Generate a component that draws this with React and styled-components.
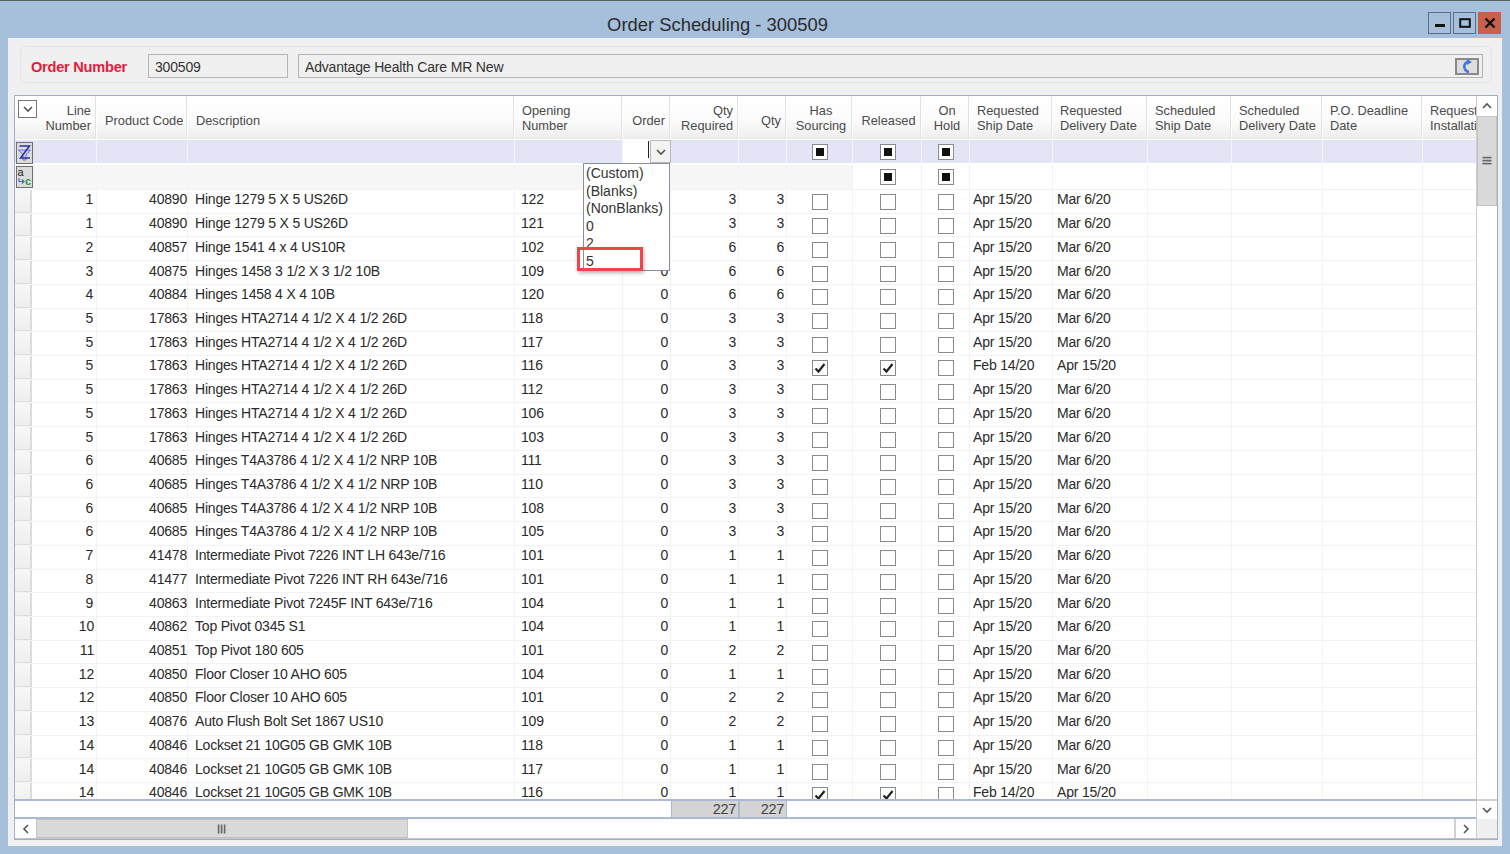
import React from "react";
import styled, { createGlobalStyle } from "styled-components";

const GlobalStyle = createGlobalStyle`
  html, body {
    margin: 0;
    padding: 0;
    background: #a6bfdb;
    overflow: hidden;
  }
  * { box-sizing: border-box; }
`;

const COLUMNS = "82px 91px 327px 108px 48px 68px 48px 66px 69px 48px 83px 95px 84px 91px 100px 60px";

const hinge5 = "Hinges HTA2714 4 1/2 X 4 1/2 26D";
const hinge6 = "Hinges T4A3786 4 1/2 X 4 1/2 NRP 10B";
const lockset = "Lockset 21 10G05 GB GMK 10B";

const rows = [
  [1, 40890, "Hinge 1279 5 X 5 US26D", 122, 3],
  [1, 40890, "Hinge 1279 5 X 5 US26D", 121, 3],
  [2, 40857, "Hinge 1541 4 x 4 US10R", 102, 6],
  [3, 40875, "Hinges 1458 3 1/2 X 3 1/2 10B", 109, 6],
  [4, 40884, "Hinges 1458 4 X 4 10B", 120, 6],
  [5, 17863, hinge5, 118, 3],
  [5, 17863, hinge5, 117, 3],
  [5, 17863, hinge5, 116, 3, true],
  [5, 17863, hinge5, 112, 3],
  [5, 17863, hinge5, 106, 3],
  [5, 17863, hinge5, 103, 3],
  [6, 40685, hinge6, 111, 3],
  [6, 40685, hinge6, 110, 3],
  [6, 40685, hinge6, 108, 3],
  [6, 40685, hinge6, 105, 3],
  [7, 41478, "Intermediate Pivot 7226 INT LH 643e/716", 101, 1],
  [8, 41477, "Intermediate Pivot 7226 INT RH 643e/716", 101, 1],
  [9, 40863, "Intermediate Pivot 7245F INT 643e/716", 104, 1],
  [10, 40862, "Top Pivot 0345 S1", 104, 1],
  [11, 40851, "Top Pivot 180 605", 101, 2],
  [12, 40850, "Floor Closer 10 AHO 605", 104, 1],
  [12, 40850, "Floor Closer 10 AHO 605", 101, 2],
  [13, 40876, "Auto Flush Bolt Set 1867 US10", 109, 2],
  [14, 40846, lockset, 118, 1],
  [14, 40846, lockset, 117, 1],
  [14, 40846, lockset, 116, 1, true],
];

const headers = [
  { label: ["Line", "Number"], align: "right" },
  { label: ["Product Code"], align: "left", pad: "8px" },
  { label: ["Description"], align: "left", pad: "8px" },
  { label: ["Opening", "Number"], align: "left" },
  { label: ["Order"], align: "right" },
  { label: ["Qty", "Required"], align: "right" },
  { label: ["Qty"], align: "right" },
  { label: ["Has", "Sourcing"], align: "center" },
  { label: ["Released"], align: "center" },
  { label: ["On", "Hold"], align: "center" },
  { label: ["Requested", "Ship Date"], align: "left" },
  { label: ["Requested", "Delivery Date"], align: "left" },
  { label: ["Scheduled", "Ship Date"], align: "left" },
  { label: ["Scheduled", "Delivery Date"], align: "left" },
  { label: ["P.O. Deadline", "Date"], align: "left" },
  { label: ["Requested", "Installation"], align: "left" },
];

const Window = styled.div`
  width: 1510px;
  height: 854px;
  display: flex;
  flex-direction: column;
  background: #a6bfdb;
  border-top: 1px solid #5a6066;
  font-family: "Liberation Sans", Arial, sans-serif;
  color: #222;
  overflow: hidden;
`;

const TitleBar = styled.div`
  height: 37px;
  flex: none;
  display: flex;
  align-items: center;
  padding: 0 9px 0 0;
`;

const Title = styled.div`
  flex: 1;
  padding: 11px 0 0 7px;
  text-align: center;
  font-size: 18.4px;
  color: #2b2b2b;
`;

const Controls = styled.div`
  display: flex;
  gap: 2px;
  align-self: flex-start;
  margin-top: 11px;
`;

const ControlButton = styled.div`
  width: 23px;
  height: 22px;
  display: flex;
  align-items: center;
  justify-content: center;
  background: ${(p) => (p.$close ? "#c9604c" : "#a6bfdb")};
  border: 1px solid ${(p) => (p.$close ? "#c9604c" : "#5c6f87")};
  svg { display: block; }
`;

const Panel = styled.div`
  flex: none;
  height: 808px;
  margin: 0 8px;
  padding: 8px 4px 6px 6px;
  background: #f0f0f0;
  display: flex;
  flex-direction: column;
`;

const OrderGroup = styled.div`
  height: 37px;
  flex: none;
  margin: 0 6px;
  padding: 3px 8px 0 10px;
  display: flex;
  align-items: center;
  border: 1px solid #dfe4ea;
  border-radius: 6px;
`;

const OrderLabel = styled.div`
  width: 117px;
  flex: none;
  padding-top: 2px;
  font-size: 14.6px;
  font-weight: 700;
  color: #e31b3c;
  letter-spacing: -0.25px;
`;

const Field = styled.div`
  height: 24px;
  display: flex;
  align-items: center;
  justify-content: space-between;
  padding: 0 3px 0 6px;
  border: 1px solid #b5b5b5;
  background: #f0f0f0;
  font-size: 14px;
  letter-spacing: -0.17px;
  color: #333;
  width: ${(p) => p.$width || "auto"};
  flex: ${(p) => (p.$grow ? 1 : "none")};
  margin-right: ${(p) => p.$gap || "0"};
`;

const FieldText = styled.span`
  padding-top: 2px;
`;

const FieldButton = styled.div`
  width: 24px;
  height: 17px;
  border: 2px solid #8a8a8a;
  background: #dedede;
  display: flex;
  align-items: center;
  justify-content: center;
`;

const GridFrame = styled.div`
  margin-top: 12px;
  width: 1484px;
  height: 745px;
  flex: none;
  display: flex;
  flex-direction: column;
  border: 1px solid #9db1cc;
  background: #fff;
`;

const GridMain = styled.div`
  flex: 1;
  min-height: 0;
  display: flex;
`;

const GridContent = styled.div`
  position: relative;
  flex: 1;
  min-width: 0;
  display: flex;
  flex-direction: column;
  overflow: hidden;
`;

const Row = styled.div`
  display: grid;
  grid-template-columns: ${COLUMNS};
  flex: none;
  height: ${(p) => p.$height || "23.72px"};
  width: 1500px;
`;

const HeaderRow = styled(Row)`
  height: 44px;
  background: #fff;
`;

const HeaderCell = styled.div`
  position: relative;
  margin: 0 1px 1px 0;
  padding-top: ${(p) => (p.$single ? "6px" : "1px")};
  padding-left: ${(p) => (p.$align === "left" ? p.$pad || "7px" : p.$align === "center" ? "4px" : "2px")};
  padding-right: ${(p) => (p.$align === "right" ? "4px" : p.$align === "center" ? "0" : "2px")};
  display: flex;
  flex-direction: column;
  justify-content: center;
  align-items: ${(p) => (p.$align === "left" ? "flex-start" : p.$align === "right" ? "flex-end" : "center")};
  background: linear-gradient(#ffffff, #fbfbfb 60%, #ececec);
  border-right: 1px solid #e2e2e2;
  font-size: 12.8px;
  line-height: 15px;
  color: #4a4a4a;
  white-space: nowrap;
  overflow: hidden;
`;

const SelectAll = styled.div`
  position: absolute;
  left: 3px;
  top: 4px;
  width: 19px;
  height: 18px;
  border: 1px solid #777;
  background: #fff;
  display: flex;
  align-items: center;
  justify-content: center;
`;

const FilterRow = styled(Row)`
  height: 23px;
  margin-bottom: 2px;
  background: #e3e5f7;
`;

const SummaryFilterRow = styled(Row)`
  height: 25px;
  background: #fff;
  border-bottom: 1px solid #f2f2f2;
`;

const FilterCell = styled.div`
  display: flex;
  align-items: center;
  justify-content: center;
  padding-left: ${(p) => (p.$nudge ? "2px" : "0")};
  border-right: 1px solid #f3f3fb;
  background: ${(p) => (p.$grey ? "#f6f6f6" : "transparent")};
`;

const OrderFilter = styled.div`
  display: flex;
  justify-content: flex-end;
  height: 23px;
  background: #fff;
`;

const Caret = styled.div`
  width: 1px;
  height: 17px;
  margin-top: 1px;
  background: #222;
`;

const DropButton = styled.div`
  width: 21px;
  height: 23px;
  margin-left: 1px;
  border: 1px solid #b8b8b8;
  background: #f3f3f3;
  display: flex;
  align-items: center;
  justify-content: center;
`;

const RowList = styled.div`
  flex: 1;
  min-height: 0;
  overflow: hidden;
  display: flex;
  flex-direction: column;
`;

const DataCell = styled.div`
  display: flex;
  align-items: center;
  justify-content: ${(p) => (p.$align === "right" ? "flex-end" : p.$align === "center" ? "center" : "flex-start")};
  padding: ${(p) => (p.$align === "right" ? `0 ${p.$pad || "2px"} 4px 0` : p.$align === "center" ? `0 0 0 ${p.$pad || "0"}` : `0 0 4px ${p.$pad || "6px"}`)};
  border-right: 1px solid #f3f3f3;
  border-bottom: 1px solid #f3f3f3;
  font-size: 14px;
  letter-spacing: -0.2px;
  color: #2a2a2a;
  white-space: nowrap;
  overflow: hidden;
`;

const LineCell = styled(DataCell)`
  justify-content: space-between;
  padding: 0 ${(p) => (p.$wide ? "2px" : "3px")} 0 0;
`;

const RowHandle = styled.div`
  width: 17px;
  height: 100%;
  background: linear-gradient(#f7f7f7, #eeeeee);
  border-right: 2px solid #dcdcdc;
  border-bottom: 1px solid #dedede;
`;

const LineValue = styled.span`
  padding-bottom: 4px;
`;

const CheckBox = styled.div`
  position: relative;
  top: ${(p) => p.$top || "1px"};
  width: 16px;
  height: 16px;
  flex: none;
  border: 1px solid #8a8a8a;
  background: #fff;
  display: flex;
  align-items: center;
  justify-content: center;
`;

const Mixed = styled.div`
  width: 8px;
  height: 8px;
  background: #111;
`;

const SummaryRow = styled(Row)`
  height: 20px;
  border-top: 2px solid #a9bad3;
  border-bottom: 2px solid #a9bad3;
`;

const SummaryCell = styled.div`
  display: flex;
  align-items: center;
  justify-content: flex-end;
  padding-right: 2px;
  background: ${(p) => (p.$total ? "#d4d4d4" : "#fff")};
  border-left: ${(p) => (p.$total ? "1px solid #a9bad3" : "0")};
  border-right: ${(p) => (p.$total ? "1px solid #a9bad3" : "0")};
  font-size: 14.5px;
  letter-spacing: -0.3px;
  color: #444;
`;

const FilterPopup = styled.div`
  position: absolute;
  left: 568px;
  top: 67px;
  width: 87px;
  height: 108px;
  padding: 1px 0 0 2px;
  background: #fff;
  border: 1px solid #8b8f9c;
  font-size: 14px;
  line-height: 17.6px;
  color: #333;
  z-index: 2;
`;

const Callout = styled.div`
  position: absolute;
  left: 562px;
  top: 151px;
  width: 66px;
  height: 24px;
  border: 3px solid #f0444c;
  box-shadow: 1px 2px 4px rgba(0, 0, 0, 0.3);
  z-index: 3;
`;

const VScroll = styled.div`
  width: 21px;
  flex: none;
  display: flex;
  flex-direction: column;
  border-left: 1px solid #ccc;
  background: #fff;
`;

const ScrollButton = styled.div`
  width: ${(p) => p.$width || "100%"};
  height: ${(p) => p.$height || "100%"};
  flex: none;
  display: flex;
  align-items: center;
  justify-content: center;
  background: #fff;
  border: 0 solid #cfcfcf;
`;

const VThumb = styled.div`
  height: 90px;
  flex: none;
  display: flex;
  align-items: center;
  justify-content: center;
  background: #d9d9d9;
  border: 1px solid #c4c4c4;
`;

const VSpacer = styled.div`
  flex: 1;
`;

const DownButton = styled(ScrollButton)`
  border-top: 2px solid #cfcfcf;
`;

const HScroll = styled.div`
  height: 20px;
  flex: none;
  display: flex;
  border-bottom: 1px solid #c4c4c4;
  background: #fff;
`;

const HThumb = styled.div`
  width: 372px;
  flex: none;
  display: flex;
  align-items: center;
  justify-content: center;
  background: #d9d9d9;
  border: 1px solid #c4c4c4;
`;

const HTrack = styled.div`
  flex: 1;
`;

const RightButton = styled(ScrollButton)`
  border-left: 2px solid #d0d0d0;
`;

const Corner = styled.div`
  width: 21px;
  flex: none;
  background: #f0f0f0;
  border-left: 1px solid #ccc;
`;

const RowIcon = styled.div`
  position: absolute;
  left: 1px;
  width: 17px;
  height: ${(p) => p.$height || "22px"};
  top: ${(p) => p.$top};
  background: #dcdcdc;
  border: 1px solid #6f6f6f;
  display: flex;
  align-items: center;
  justify-content: center;
`;

const Chevron = ({ dir = "down", size = 10, color = "#555" }) => {
  const points = {
    down: "1,3 5,7 9,3",
    up: "1,7 5,3 9,7",
    left: "7,1 3,5 7,9",
    right: "3,1 7,5 3,9",
  }[dir];
  return (
    <svg width={size} height={size} viewBox="0 0 10 10">
      <polyline points={points} fill="none" stroke={color} strokeWidth="1.6" />
    </svg>
  );
};

const Grip = ({ vertical }) => (
  <svg width="10" height="10" viewBox="0 0 10 10">
    {[1.5, 4.5, 7.5].map((p) =>
      vertical ? (
        <rect key={p} x={p - 0.7} y="0.5" width="1.6" height="9" fill="#666" />
      ) : (
        <rect key={p} x="0.5" y={p - 0.7} width="9" height="1.6" fill="#666" />
      )
    )}
  </svg>
);

const Tick = () => (
  <svg width="14" height="14" viewBox="0 0 14 14">
    <path d="M2.5 7.5 L5.5 10.5 L11.5 3" fill="none" stroke="#222" strokeWidth="2.2" />
  </svg>
);

const FilterGlyph = () => (
  <svg width="15" height="20" viewBox="0 0 15 20">
    <path d="M1.5 7 H13.5 L9 12 V17 H6 V12 Z" fill="#c9cbf0" stroke="#6e72c8" strokeWidth="1" />
    <path d="M2.5 3 H12.5 L3.5 15 H13" fill="none" stroke="#2b2f9a" strokeWidth="1.5" />
  </svg>
);

const SummaryGlyph = () => (
  <svg width="15" height="20" viewBox="0 0 15 20">
    <text x="0.5" y="9" fontSize="11" fontFamily="Liberation Sans" fill="#222">a</text>
    <path d="M2 11 V14.5 H7 M5 12.5 L7 14.5 L5 16.5" fill="none" stroke="#3a6fc0" strokeWidth="1.1" />
    <text x="8" y="18" fontSize="11" fontWeight="700" fontFamily="Liberation Sans" fill="#2a9a3a">c</text>
  </svg>
);

const LinkGlyph = () => (
  <svg width="14" height="14" viewBox="0 0 14 14">
    <path d="M7.5 3 C4.5 4 4 7 4.5 9 C5 11 6.5 12.5 9 13" fill="none" stroke="#3f77e0" strokeWidth="2.6" />
    <path d="M7 0 L12 3 L7 6 Z" fill="#3f77e0" />
  </svg>
);

function Header() {
  return (
    <HeaderRow>
      {headers.map((h, i) => (
        <HeaderCell key={i} $align={h.align} $pad={h.pad} $single={h.label.length === 1}>
          {i === 0 && (
            <SelectAll>
              <Chevron />
            </SelectAll>
          )}
          {h.label.map((line) => (
            <span key={line}>{line}</span>
          ))}
        </HeaderCell>
      ))}
    </HeaderRow>
  );
}

function DataRow({ row }) {
  const [line, code, desc, opening, qty, checked] = row;
  return (
    <Row>
      <LineCell $wide={line > 9}>
        <RowHandle />
        <LineValue>{line}</LineValue>
      </LineCell>
      <DataCell $align="right" $pad="0">{code}</DataCell>
      <DataCell $pad="7px">{desc}</DataCell>
      <DataCell>{opening}</DataCell>
      <DataCell $align="right">0</DataCell>
      <DataCell $align="right">{qty}</DataCell>
      <DataCell $align="right">{qty}</DataCell>
      <DataCell $align="center">
        <CheckBox>{checked && <Tick />}</CheckBox>
      </DataCell>
      <DataCell $align="center" $pad="2px">
        <CheckBox>{checked && <Tick />}</CheckBox>
      </DataCell>
      <DataCell $align="center">
        <CheckBox />
      </DataCell>
      <DataCell $pad="3px">{checked ? "Feb 14/20" : "Apr 15/20"}</DataCell>
      <DataCell $pad="4px">{checked ? "Apr 15/20" : "Mar 6/20"}</DataCell>
      <DataCell />
      <DataCell />
      <DataCell />
      <DataCell />
    </Row>
  );
}

export default function App() {
  return (
    <Window>
      <GlobalStyle />
      <TitleBar>
        <Title>Order Scheduling - 300509</Title>
        <Controls>
          <ControlButton>
            <svg width="12" height="12" viewBox="0 0 12 12">
              <rect x="1" y="7" width="10" height="3" fill="#111" />
            </svg>
          </ControlButton>
          <ControlButton>
            <svg width="12" height="12" viewBox="0 0 12 12">
              <rect x="1.2" y="2.2" width="9.6" height="7.6" fill="none" stroke="#111" strokeWidth="2" />
            </svg>
          </ControlButton>
          <ControlButton $close>
            <svg width="12" height="12" viewBox="0 0 12 12">
              <path d="M1.5 1.5 L10.5 10.5 M10.5 1.5 L1.5 10.5" stroke="#111" strokeWidth="2.4" />
            </svg>
          </ControlButton>
        </Controls>
      </TitleBar>
      <Panel>
        <OrderGroup>
          <OrderLabel>Order Number</OrderLabel>
          <Field $width="140px" $gap="10px"><FieldText>300509</FieldText></Field>
          <Field $grow>
            <FieldText>Advantage Health Care MR New</FieldText>
            <FieldButton>
              <LinkGlyph />
            </FieldButton>
          </Field>
        </OrderGroup>
        <GridFrame>
          <GridMain>
            <GridContent>
              <Header />
              <FilterRow>
                {headers.map((h, i) =>
                  i === 4 ? (
                    <OrderFilter key={i}>
                      <Caret />
                      <DropButton>
                        <Chevron />
                      </DropButton>
                    </OrderFilter>
                  ) : (
                    <FilterCell key={i} $nudge={i === 8}>
                      {[7, 8, 9].includes(i) && (
                        <CheckBox $top="0">
                          <Mixed />
                        </CheckBox>
                      )}
                    </FilterCell>
                  )
                )}
              </FilterRow>
              <SummaryFilterRow>
                {headers.map((h, i) => (
                  <FilterCell key={i} $grey={i < 8} $nudge={i === 8}>
                    {[8, 9].includes(i) && (
                      <CheckBox $top="0">
                        <Mixed />
                      </CheckBox>
                    )}
                  </FilterCell>
                ))}
              </SummaryFilterRow>
              <RowList>
                {rows.map((row, i) => (
                  <DataRow key={i} row={row} />
                ))}
              </RowList>
              <SummaryRow>
                {headers.map((h, i) => (
                  <SummaryCell key={i} $total={i === 5 || i === 6}>
                    {(i === 5 || i === 6) && "227"}
                  </SummaryCell>
                ))}
              </SummaryRow>
              <RowIcon $top="46px">
                <FilterGlyph />
              </RowIcon>
              <RowIcon $top="70px">
                <SummaryGlyph />
              </RowIcon>
              <FilterPopup>
                <div>(Custom)</div>
                <div>(Blanks)</div>
                <div>(NonBlanks)</div>
                <div>0</div>
                <div>2</div>
                <div>5</div>
              </FilterPopup>
              <Callout />
            </GridContent>
            <VScroll>
              <ScrollButton $height="20px">
                <Chevron dir="up" />
              </ScrollButton>
              <VThumb>
                <Grip />
              </VThumb>
              <VSpacer />
              <DownButton $height="20px">
                <Chevron />
              </DownButton>
            </VScroll>
          </GridMain>
          <HScroll>
            <ScrollButton $width="21px">
              <Chevron dir="left" />
            </ScrollButton>
            <HThumb>
              <Grip vertical />
            </HThumb>
            <HTrack />
            <RightButton $width="22px">
              <Chevron dir="right" />
            </RightButton>
            <Corner />
          </HScroll>
        </GridFrame>
      </Panel>
    </Window>
  );
}
